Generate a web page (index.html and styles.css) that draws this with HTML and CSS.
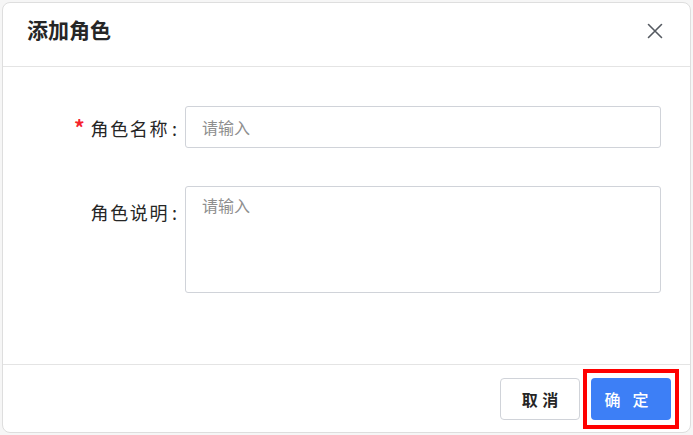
FILE: index.html
```html
<!DOCTYPE html>
<html lang="zh-CN">
<head>
    <meta charset="UTF-8">
    <title>添加角色</title>
    <link rel="stylesheet" href="styles.css">
</head>
<body>
    <div class="dialog">
        <div class="dialog-header">
            <h2 class="dialog-title">添加角色</h2>
            <button class="close-btn" aria-label="关闭">
                <svg width="16" height="16" viewBox="0 0 16 16">
                    <path d="M1.5 1.5 L14.5 14.5 M14.5 1.5 L1.5 14.5" stroke="#555a61" stroke-width="1.6" fill="none" stroke-linecap="round"/>
                </svg>
            </button>
        </div>
        <div class="dialog-body">
            <div class="form-row">
                <label class="form-label" for="role-name"><span class="required">*</span>角色名称<span class="colon">:</span></label>
                <input class="form-input" id="role-name" type="text" placeholder="请输入">
            </div>
            <div class="form-row">
                <label class="form-label label-top" for="role-desc">角色说明<span class="colon">:</span></label>
                <textarea class="form-textarea" id="role-desc" placeholder="请输入"></textarea>
            </div>
        </div>
        <div class="dialog-footer">
            <button class="btn btn-cancel">取 消</button>
            <span class="highlight">
                <button class="btn btn-primary">确定</button>
            </span>
        </div>
    </div>
</body>
</html>
```

FILE: styles.css
```css
* {
    box-sizing: border-box;
}
body {
    margin: 0;
    padding: 2px;
    background: #f6f6f6;
    font-family: "Noto Sans CJK SC", "Noto Sans", sans-serif;
    color: #333;
}
.dialog {
    width: 689px;
    height: 431px;
    background: #fff;
    border: 1px solid #dedede;
    border-radius: 8px;
    display: flex;
    flex-direction: column;
}
.dialog-header {
    height: 64px;
    flex: none;
    border-bottom: 1px solid #e4e4e4;
    display: flex;
    align-items: center;
    justify-content: space-between;
    padding: 0 27px 7px 24px;
}
.dialog-title {
    margin: 0 0 4px;
    font-size: 21px;
    font-weight: 700;
    color: #262626;
}
.close-btn {
    background: none;
    border: none;
    padding: 0;
    width: 16px;
    height: 16px;
    cursor: pointer;
    display: flex;
}
.dialog-body {
    flex: 1;
    padding: 39px 29px 0 0;
}
.form-row {
    display: flex;
    align-items: flex-start;
    gap: 8px;
    margin-bottom: 37px;
}
.form-label {
    width: 174px;
    flex: none;
    text-align: right;
    font-size: 18px;
    letter-spacing: 1.6px;
    line-height: 42px;
    color: #262626;
}
.form-label.label-top {
    padding-top: 5px;
}
.colon {
    margin-left: 3px;
    letter-spacing: 0;
}
.required {
    color: #f5222d;
    font-size: 21px;
    font-weight: 700;
    margin-right: 6px;
    letter-spacing: 0;
}
.form-input,
.form-textarea {
    width: 476px;
    border: 1px solid #d0d3d9;
    border-radius: 3px;
    font-family: inherit;
    font-size: 16px;
    color: #333;
    padding: 0 16px;
    outline: none;
}
.form-input {
    height: 42px;
}
.form-textarea {
    height: 107px;
    padding-top: 6px;
    resize: none;
}
.form-input::placeholder,
.form-textarea::placeholder {
    color: #8e8e8e;
}
.dialog-footer {
    height: 68px;
    flex: none;
    border-top: 1px solid #e4e4e4;
    display: flex;
    align-items: center;
    justify-content: flex-end;
    gap: 3px;
    padding-right: 11px;
}
.btn {
    width: 80px;
    height: 42px;
    border-radius: 4px;
    font-family: inherit;
    font-size: 16px;
    font-weight: 700;
    cursor: pointer;
}
.btn-cancel {
    background: #fff;
    border: 1px solid #d0d3d9;
    color: #262626;
    word-spacing: 1px;
}
.btn-primary {
    background: #3d7ff6;
    border: none;
    color: #fff;
    font-weight: 500;
    letter-spacing: 12px;
    text-indent: 3px;
}
.highlight {
    display: flex;
    border: 4px solid #f00;
    padding: 5px 4px;
}
```
